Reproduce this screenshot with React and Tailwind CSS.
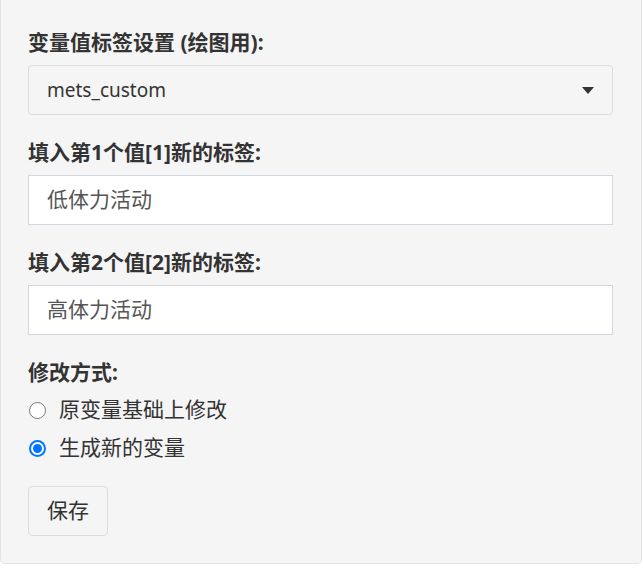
import React, { useState } from 'react'

const font = { fontFamily: '"Noto Sans", "Noto Sans CJK SC", sans-serif' }

const Field = ({ label, children }) => (
  <div className="mb-[23px]">
    <div className="text-[21px] leading-[28px] font-bold text-[#333] mb-[9px]">{label}</div>
    {children}
  </div>
)

const Radio = ({ checked, label, onClick }) => (
  <div className="flex items-center h-[38px] cursor-pointer" onClick={onClick}>
    {checked ? (
      <span className="w-[17px] h-[17px] rounded-full bg-[#0075ff] flex items-center justify-center">
        <span className="w-[13px] h-[13px] rounded-full bg-white flex items-center justify-center">
          <span className="w-[9px] h-[9px] rounded-full bg-[#0075ff]" />
        </span>
      </span>
    ) : (
      <span className="w-[17px] h-[17px] rounded-full border-[1.5px] border-[#767676] bg-white" />
    )}
    <span className="ml-[13px] text-[21px] text-[#333]">{label}</span>
  </div>
)

export default function App() {
  const [mode, setMode] = useState('new')

  return (
    <div className="w-[643px] h-[568px] bg-white" style={font}>
      <div className="w-[642px] h-[564px] bg-[#f5f5f5] border border-t-0 border-[#e3e3e3] rounded-b-[5px] pl-[27px] pr-[28px] pt-[28px]">
        <Field label="变量值标签设置 (绘图用):">
          <div className="h-[50px] border border-[#dcdcdc] rounded-[4px] flex items-center justify-between pl-[18px] pr-[18px] text-[19px] text-[#333]">
            <span>mets_custom</span>
            <svg width="12" height="7" viewBox="0 0 12 7">
              <path d="M0 0 L12 0 L6 7 Z" fill="#333" />
            </svg>
          </div>
        </Field>

        <Field label="填入第1个值[1]新的标签:">
          <div className="h-[50px] border border-[#d1d5de] bg-white flex items-center pl-[18px] text-[21px] text-[#555]">
            低体力活动
          </div>
        </Field>

        <Field label="填入第2个值[2]新的标签:">
          <div className="h-[50px] border border-[#d1d5de] bg-white flex items-center pl-[18px] text-[21px] text-[#555]">
            高体力活动
          </div>
        </Field>

        <div className="text-[21px] leading-[28px] font-bold text-[#333]">修改方式:</div>
        <div className="mt-[5px] pl-[1px]">
          <Radio checked={mode === 'orig'} label="原变量基础上修改" onClick={() => setMode('orig')} />
          <Radio checked={mode === 'new'} label="生成新的变量" onClick={() => setMode('new')} />
        </div>

        <button className="mt-[19px] w-[80px] h-[50px] border border-[#dcdcdc] rounded-[4px] bg-[#f5f5f5] text-[21px] text-[#333]">
          保存
        </button>
      </div>
    </div>
  )
}
